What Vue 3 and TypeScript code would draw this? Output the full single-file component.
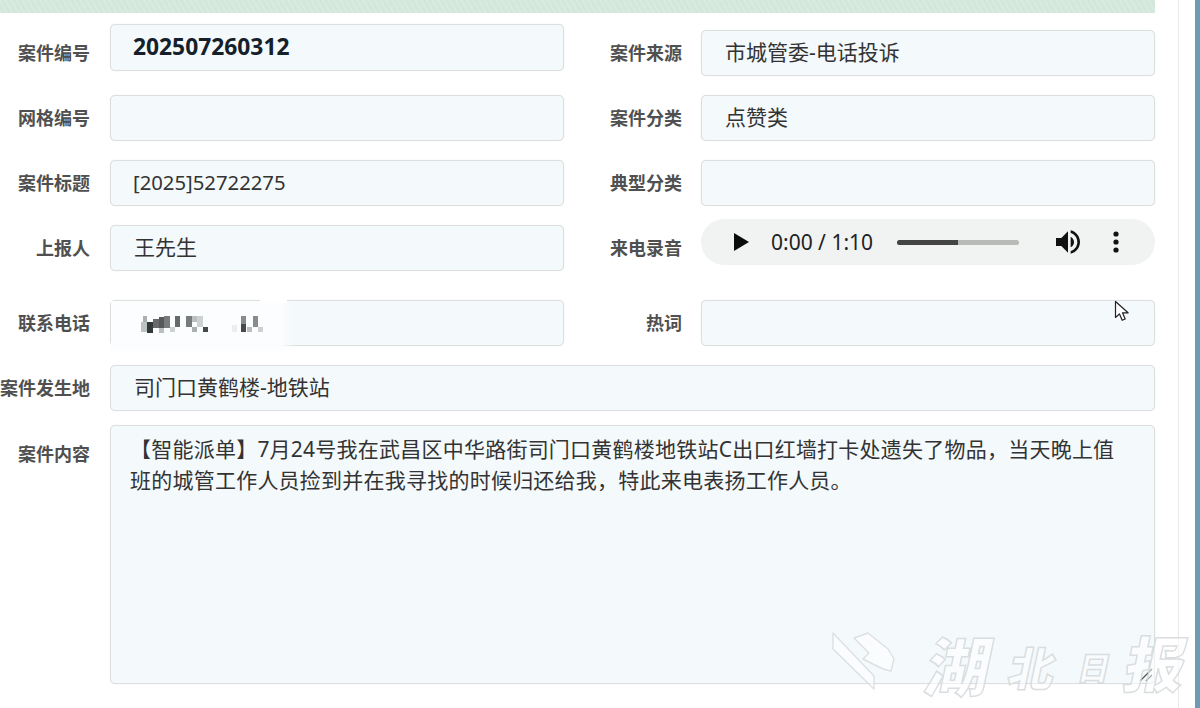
<script setup lang="ts">
interface Field {
  label: string;
  value?: string;
}

const mosaic: [number, number, number, number, string][] = [
  [5, 9, 6, 10, '#bcc3c3'],
  [7, 3, 4, 6, '#aab0b0'],
  [11, 9, 6, 11, '#343838'],
  [17, 6, 6, 9, '#666a6a'],
  [23, 4, 5, 11, '#555959'],
  [23, 15, 5, 5, '#bbbfbf'],
  [28, 3, 6, 12, '#777b7b'],
  [34, 14, 5, 5, '#cdd1d1'],
  [39, 3, 5, 11, '#666a6a'],
  [50, 3, 6, 11, '#777b7b'],
  [56, 3, 6, 6, '#bbbfbf'],
  [56, 14, 5, 5, '#aab0b0'],
  [61, 3, 6, 11, '#cdd1d1'],
  [67, 14, 5, 5, '#444848'],
  [96, 12, 5, 7, '#eceeee'],
  [105, 3, 5, 8, '#888c8c'],
  [105, 11, 5, 8, '#474b4b'],
  [111, 14, 5, 5, '#bbbfbf'],
  [117, 3, 5, 11, '#888c8c'],
  [122, 14, 5, 5, '#cdd1d1'],
];

const rowOne: Field = { label: '网格编号' };
const rowTwo: Field = { label: '案件分类', value: '点赞类' };
</script>

<template>
  <div class="page">
    <div class="panel">
      <div class="band"></div>
      <div class="form">
        <div class="row">
          <div class="cell">
            <label class="name">案件编号</label>
            <div class="field field-bold">202507260312</div>
          </div>
          <div class="cell cell-right">
            <label class="name">案件来源</label>
            <div class="field">市城管委-电话投诉</div>
          </div>
        </div>

        <div class="row">
          <div class="cell">
            <label class="name">{{ rowOne.label }}</label>
            <div class="field"></div>
          </div>
          <div class="cell cell-right">
            <label class="name">{{ rowTwo.label }}</label>
            <div class="field">{{ rowTwo.value }}</div>
          </div>
        </div>

        <div class="row">
          <div class="cell">
            <label class="name">案件标题</label>
            <div class="field field-tight">[2025]52722275</div>
          </div>
          <div class="cell cell-right">
            <label class="name">典型分类</label>
            <div class="field"></div>
          </div>
        </div>

        <div class="row">
          <div class="cell">
            <label class="name">上报人</label>
            <div class="field">王先生</div>
          </div>
          <div class="cell cell-right">
            <label class="name">来电录音</label>
            <div class="audio">
              <svg class="play" width="15" height="18" viewBox="0 0 15 18">
                <path d="M0 0 15 9 0 18z" fill="#0b0b0b" />
              </svg>
              <span class="time">0:00 / 1:10</span>
              <div class="track"><div class="track-done" style="width: 50%"></div></div>
              <svg class="volume" width="32" height="32" viewBox="0 0 24 24">
                <path
                  fill="#111"
                  d="M3 9v6h4l5 5V4L7 9H3zm13.5 3c0-1.77-1.02-3.29-2.5-4.03v8.05c1.48-.73 2.5-2.25 2.5-4.02zM14 3.23v2.06c2.89.86 5 3.54 5 6.71s-2.11 5.85-5 6.71v2.06c4.01-.91 7-4.49 7-8.77s-2.99-7.86-7-8.77z"
                />
              </svg>
              <svg class="more" width="6" height="22" viewBox="0 0 6 22">
                <circle cx="3" cy="3" r="2.6" fill="#111" />
                <circle cx="3" cy="11" r="2.6" fill="#111" />
                <circle cx="3" cy="19" r="2.6" fill="#111" />
              </svg>
            </div>
          </div>
        </div>

        <div class="row row-phone">
          <div class="cell">
            <label class="name">联系电话</label>
            <div class="field field-phone">
              <div class="erase"></div>
              <div class="erase-gap"></div>
              <svg class="blur" width="130" height="22" viewBox="0 0 130 22">
                <rect
                  v-for="(m, i) in mosaic"
                  :key="i"
                  :x="m[0]"
                  :y="m[1]"
                  :width="m[2]"
                  :height="m[3]"
                  :fill="m[4]"
                />
              </svg>
            </div>
          </div>
          <div class="cell cell-right">
            <label class="name">热词</label>
            <div class="field"></div>
          </div>
        </div>

        <div class="row">
          <div class="cell cell-wide">
            <label class="name">案件发生地</label>
            <div class="field">司门口黄鹤楼-地铁站</div>
          </div>
        </div>

        <div class="row row-content">
          <div class="cell cell-wide">
            <label class="name name-top">案件内容</label>
            <div class="field field-area">
              【智能派单】7月24号我在武昌区中华路街司门口黄鹤楼地铁站C出口红墙打卡处遗失了物品，当天晚上值班的城管工作人员捡到并在我寻找的时候归还给我，特此来电表扬工作人员。
              <svg class="grip" width="14" height="14" viewBox="0 0 14 14">
                <path d="M1 13 13 1M7 13 13 7" stroke="#555" stroke-width="1.3" fill="none" />
              </svg>
            </div>
          </div>
        </div>
      </div>
    </div>
    <div class="strip"></div>

    <!-- mouse pointer left in the capture -->
    <svg class="pointer" width="17" height="23" viewBox="0 0 17 23">
      <path
        d="M1.5 1.5v16l4-3.6 2.7 6.4 3-1.3-2.7-6.2h5.6z"
        fill="#fff"
        stroke="#222"
        stroke-width="1.2"
        stroke-linejoin="round"
      />
    </svg>

    <!-- newspaper watermark -->
    <div class="mark">
      <svg class="mark-logo" width="66" height="62" viewBox="0 0 66 62">
        <path
          d="M2 2 43 45 43 58 2 18zM23 7 37 2 57 18 63 28 60 40 52 38 32 28 38 22z"
          fill="rgba(255,255,255,0.55)"
          stroke="rgba(214,218,220,0.8)"
          stroke-width="1.4"
          stroke-linejoin="round"
        />
      </svg>
      <span class="mark-text mark-hu">湖</span>
      <span class="mark-text mark-bei">北</span>
      <span class="mark-text mark-ri">日</span>
      <span class="mark-text mark-bao">报</span>
    </div>
  </div>
</template>

<style scoped>
.page {
  position: relative;
  display: flex;
  width: 1200px;
  height: 708px;
  overflow: hidden;
  background: #fff;
  font-family: 'Noto Sans', 'Noto Sans CJK SC', sans-serif;
  color: #333;
}

.panel {
  width: 1178px;
  border-right: 1px solid #e9e9e9;
  box-sizing: content-box;
}

.band {
  width: 1155px;
  height: 13px;
  background-color: #d3e8db;
  background-image: repeating-linear-gradient(60deg, rgba(255, 255, 255, 0.14) 0 2px, transparent 2px 5px);
}

.strip {
  width: 5px;
  margin-left: auto;
  background: #6f9ab3;
}

.form {
  display: flex;
  flex-direction: column;
  gap: 19px;
  width: 1155px;
  padding-top: 17px;
}

.row {
  display: flex;
  gap: 46px;
  height: 46px;
}

.row-phone {
  margin-top: 10px;
}

.row-content {
  height: 259px;
  margin-top: -5px;
}

.cell {
  display: flex;
  align-items: center;
  gap: 20px;
  width: 564px;
}

.cell-right {
  gap: 19px;
  width: 545px;
}

.cell-wide {
  align-items: flex-start;
  width: 100%;
}

.cell-wide .name {
  line-height: 46px;
}

.name {
  flex: none;
  width: 90px;
  font-size: 18px;
  font-weight: 700;
  line-height: 24px;
  text-align: right;
  color: #505050;
  white-space: nowrap;
}

.cell-right .name {
  width: 72px;
}

.cell-wide .name-top {
  line-height: 58px;
}

.field {
  position: relative;
  flex: 1;
  box-sizing: border-box;
  height: 46px;
  padding: 0 23px;
  border: 1px solid #dcdfde;
  border-radius: 5px;
  background: #f4f9fb;
  box-shadow: 0 0 1px rgba(0, 0, 0, 0.12);
  font-size: 21px;
  line-height: 43px;
  color: #333;
}

.field-bold {
  flex: none;
  width: 454px;
  height: 47px;
  margin-top: -6px;
  margin-bottom: auto;
  padding-left: 22px;
  font-size: 22.8px;
  font-weight: 700;
  line-height: 43px;
  color: #15202b;
}

.field-tight {
  padding-left: 22px;
  font-size: 20.3px;
}

.field-area {
  height: 259px;
  padding: 8px 30px 0 19px;
  letter-spacing: 0.23px;
  line-height: 31px;
}

.erase {
  position: absolute;
  top: 0;
  left: 0;
  width: 184px;
  height: 50px;
  background: linear-gradient(90deg, #fcfdfe 92%, rgba(252, 253, 254, 0));
}

.erase-gap {
  position: absolute;
  top: -3px;
  left: 149px;
  width: 27px;
  height: 5px;
  background: #fff;
}

.blur {
  position: absolute;
  top: 12px;
  left: 25px;
  filter: blur(0.5px);
}

.grip {
  position: absolute;
  right: 1px;
  bottom: 1px;
}

.audio {
  display: flex;
  flex: 1;
  align-items: center;
  box-sizing: border-box;
  height: 46px;
  margin-top: -12px;
  padding-left: 33px;
  border-radius: 23px;
  background: #f1f3f2;
}

.play {
  flex: none;
}

.time {
  width: 102px;
  margin-left: 22px;
  font-size: 21px;
  white-space: nowrap;
  color: #222;
}

.track {
  width: 122px;
  height: 5px;
  margin-left: 24px;
  border-radius: 3px;
  background: #b7bab7;
  overflow: hidden;
}

.track-done {
  height: 100%;
  background: #444;
}

.volume {
  flex: none;
  margin-left: 33px;
}

.more {
  flex: none;
  margin-left: 29px;
}

.pointer {
  position: absolute;
  top: 300px;
  left: 1114px;
}

.mark {
  position: absolute;
  inset: 0;
  pointer-events: none;
}

.mark-logo {
  position: absolute;
  top: 631px;
  left: 831px;
}

.mark-text {
  position: absolute;
  font-family: 'Noto Sans CJK SC', sans-serif;
  font-weight: 900;
  line-height: 1;
  color: rgba(255, 255, 255, 0.5);
  -webkit-text-stroke: 1.5px rgba(212, 216, 218, 0.85);
  transform: skewX(-12deg);
}

.mark-hu {
  top: 631px;
  left: 928px;
  font-size: 64px;
}

.mark-bei {
  top: 643px;
  left: 1010px;
  font-size: 46px;
}

.mark-ri {
  top: 650px;
  left: 1079px;
  font-size: 32px;
}

.mark-bao {
  top: 631px;
  left: 1127px;
  font-size: 60px;
}
</style>
